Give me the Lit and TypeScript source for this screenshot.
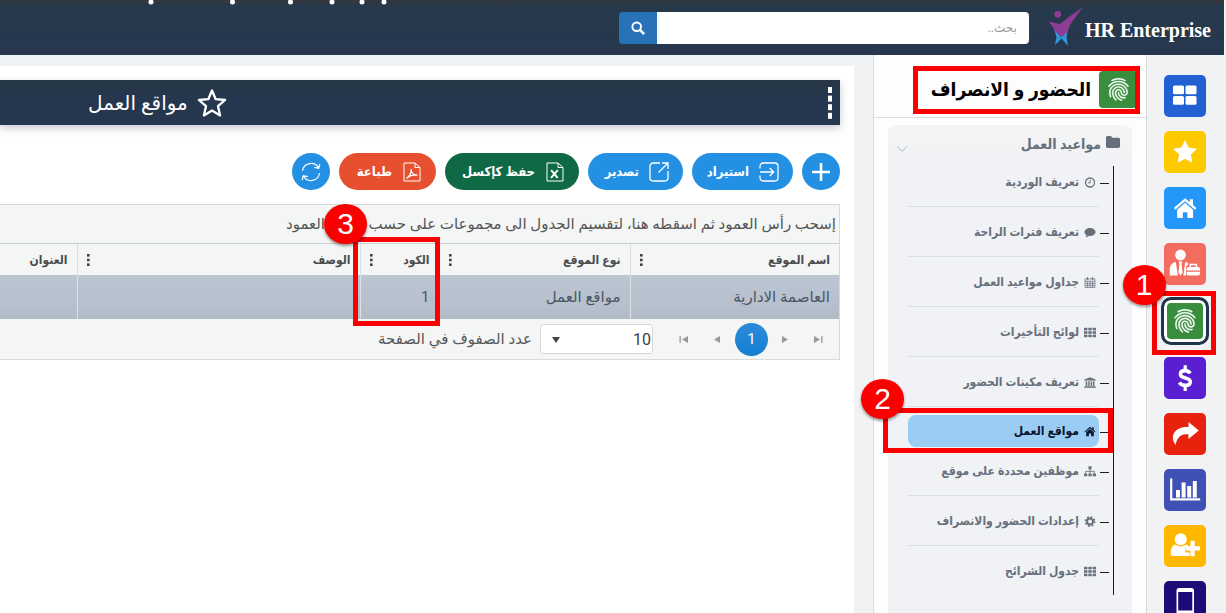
import { LitElement, html, css, svg, TemplateResult } from "lit";
import { customElement, property, state } from "lit/decorators.js";
import { classMap } from "lit/directives/class-map.js";

const icon = (box: string, body: TemplateResult, cls = "") =>
  html`<svg class=${"icon " + cls} viewBox=${box} aria-hidden="true">${body}</svg>`;

const fingerprint = svg`<path fill="currentColor" stroke="currentColor" stroke-width=".35" d="M17.81 4.47c-.08 0-.16-.02-.23-.06C15.66 3.42 14 3 12.01 3c-1.98 0-3.86.47-5.57 1.41-.24.13-.54.04-.68-.2-.13-.24-.04-.55.2-.68C7.82 2.52 9.86 2 12.01 2c2.13 0 3.99.47 6.03 1.52.25.13.34.43.21.67-.09.18-.26.28-.44.28zM3.5 9.72c-.1 0-.2-.03-.29-.09-.23-.16-.28-.47-.12-.7.99-1.4 2.25-2.5 3.75-3.27C9.98 4.04 14 4.03 17.15 5.65c1.5.77 2.76 1.86 3.75 3.25.16.22.11.54-.12.7-.23.16-.54.11-.7-.12-.9-1.26-2.04-2.25-3.39-2.94-2.87-1.47-6.54-1.47-9.4.01-1.36.7-2.5 1.7-3.4 2.96-.08.14-.23.21-.39.21zm6.25 12.07c-.13 0-.26-.05-.35-.15-.87-.87-1.34-1.43-2.01-2.64-.69-1.23-1.05-2.73-1.05-4.34 0-2.97 2.54-5.39 5.66-5.39s5.66 2.42 5.66 5.39c0 .28-.22.5-.5.5s-.5-.22-.5-.5c0-2.42-2.09-4.39-4.66-4.39-2.57 0-4.66 1.97-4.66 4.39 0 1.44.32 2.77.93 3.85.64 1.15 1.08 1.64 1.85 2.42.19.2.19.51 0 .71-.11.1-.24.15-.37.15zm7.17-1.85c-1.19 0-2.24-.3-3.1-.89-1.49-1.01-2.38-2.65-2.38-4.39 0-.28.22-.5.5-.5s.5.22.5.5c0 1.41.72 2.74 1.94 3.56.71.48 1.54.71 2.54.71.24 0 .64-.03 1.04-.1.27-.05.53.13.58.41.05.27-.13.53-.41.58-.57.11-1.07.12-1.21.12zM14.91 22c-.04 0-.09-.01-.13-.02-1.59-.44-2.63-1.03-3.72-2.1-1.4-1.39-2.17-3.24-2.17-5.22 0-1.62 1.38-2.94 3.08-2.94 1.7 0 3.08 1.32 3.08 2.94 0 1.07.93 1.94 2.08 1.94s2.08-.87 2.08-1.94c0-3.77-3.25-6.83-7.25-6.83-2.84 0-5.44 1.58-6.61 4.03-.39.81-.59 1.76-.59 2.8 0 .78.07 2.01.67 3.61.1.26-.03.55-.29.64-.26.1-.55-.04-.64-.29-.49-1.31-.73-2.61-.73-3.96 0-1.2.23-2.29.68-3.24 1.33-2.79 4.28-4.6 7.51-4.6 4.55 0 8.25 3.51 8.25 7.83 0 1.62-1.38 2.94-3.08 2.94s-3.08-1.32-3.08-2.94c0-1.07-.93-1.94-2.08-1.94s-2.08.87-2.08 1.94c0 1.71.66 3.31 1.87 4.51.95.94 1.86 1.46 3.27 1.85.27.07.42.35.35.61-.05.23-.26.38-.47.38z"/>`;

const houseShape = svg`<path fill="currentColor" d="M12 2.500 1.200 12l1.400 1.600L12 5.400l9.400 8.200 1.400-1.600-3.300-2.900V3.600h-3v2.900z"/><path fill="currentColor" d="M12 7 4.400 13.600V21.500h5.400v-5.600h4.400v5.600h5.400v-7.900z"/>`;

const gridShape = svg`<g fill="currentColor"><rect x="0" y="0" width="4" height="3"/><rect x="5" y="0" width="4" height="3"/><rect x="10" y="0" width="4" height="3"/><rect x="0" y="4" width="4" height="3"/><rect x="5" y="4" width="4" height="3"/><rect x="10" y="4" width="4" height="3"/><rect x="0" y="8" width="4" height="3"/><rect x="5" y="8" width="4" height="3"/><rect x="10" y="8" width="4" height="3"/></g>`;

interface Entry { label: string; box: string; shape: TemplateResult; }

const menu: Entry[] = [
  { label: "تعريف الوردية", box: "0 0 12 12", shape: svg`<circle cx="6" cy="6" r="4.900" fill="none" stroke="currentColor" stroke-width="1.400"/><path d="M6.200 3v3.400H3.800" fill="none" stroke="currentColor"/>` },
  { label: "تعريف فترات الراحة", box: "0 0 12 12", shape: svg`<path fill="currentColor" d="M6 1.200c3.400 0 6 1.900 6 4.300s-2.600 4.300-6 4.300c-.5 0-1-.1-1.400-.1C3.500 10.700 2.200 11.200 1 11.300c.7-.8 1.100-1.500 1.200-2.400C.8 8.100 0 6.900 0 5.500c0-2.400 2.600-4.300 6-4.300z"/>` },
  { label: "جداول مواعيد العمل", box: "0 0 12 12", shape: svg`<path d="M.6 2.100h10.800v9.300H.6zM.6 4.600h10.800M.6 6.900h10.800M.6 9.100h10.800M3.300 4.600v6.800M6 4.600v6.800M8.700 4.600v6.800" fill="none" stroke="currentColor" stroke-width=".8"/><path d="M3.300.3v2.700M8.700.3v2.700" stroke="currentColor" stroke-width="1.500"/>` },
  { label: "لوائح التأخيرات", box: "0 0 14 11", shape: gridShape },
  { label: "تعريف مكينات الحضور", box: "0 0 14 12", shape: svg`<path fill="currentColor" d="M7 0 0 2.800v.9h14v-.9zM2 4.500h1.800v5H2zm2.900 0h1.700v5H4.900zm2.900 0h1.700v5H7.800zm2.700 0h1.700v5h-1.700zM1 9.900h12v.9H1zM0 11.100h14v.9H0z"/>` },
  { label: "مواقع العمل", box: "0 1 24 22", shape: houseShape },
  { label: "موظفين محددة على موقع", box: "0 0 14 12", shape: svg`<path fill="currentColor" d="M5.200 0h3.600v3.400H5.200zM0 8.200h3.800v3.400H0zM5.100 8.200h3.800v3.400H5.100zM10.200 8.200H14v3.400h-3.800z"/><path d="M7 3v5.500M1.900 8.500V5.800h10.200v2.700" fill="none" stroke="currentColor"/>` },
  { label: "إعدادات الحضور والانصراف", box: "0 0 12 12", shape: svg`<circle cx="6" cy="6" r="3.200" fill="none" stroke="currentColor" stroke-width="2.200"/><circle cx="6" cy="6" r="4.900" fill="none" stroke="currentColor" stroke-width="2" stroke-dasharray="2 1.848"/>` },
  { label: "جدول الشرائح", box: "0 0 14 11", shape: gridShape },
];

const apps: { name: string; tone: string; shape: TemplateResult }[] = [
  { name: "الرئيسية", tone: "blue", shape: svg`<g fill="currentColor"><rect x="2" y="3.500" width="11" height="8.800" rx="1.500"/><rect x="14.500" y="3.500" width="11" height="8.800" rx="1.500"/><rect x="2" y="14" width="11" height="8.800" rx="1.500"/><rect x="14.500" y="14" width="11" height="8.800" rx="1.500"/></g>` },
  { name: "المفضلة", tone: "gold", shape: svg`<path fill="currentColor" d="m14 2 3.600 7.600 8.400 1.100-6.100 5.800 1.500 8.300-7.400-4-7.400 4 1.500-8.300L2 10.700l8.400-1.100z"/>` },
  { name: "المنزل", tone: "sky", shape: svg`<g transform="translate(1.500 1.500) scale(1.050)">${houseShape}</g>` },
  { name: "الموظفون", tone: "coral", shape: svg`<g fill="currentColor"><circle cx="9.500" cy="5" r="5.400"/><path d="M-1.200 25.500v-6.500c0-4 2.600-6.500 6-7l2 13.500zM7.600 11.600h3.800l-.9 3 1.200 8-2.200 2.900-2.200-2.900 1.200-8zM14.200 12c1.300.2 2.400.6 3.300 1.200-.5.400-.9 1-1 2.200-1.100.3-1.500 1-1.500 2v8.100h-2.600z"/><path d="M15.500 19c0-1.200.8-2 2-2h9.500c1.200 0 2 .8 2 2v1.600H15.500zM15.500 21.700H29v1.800c0 1.200-.8 2-2 2h-9.500c-1.200 0-2-.8-2-2z"/></g><path d="M19.200 17v-2.400h6.200V17" fill="none" stroke="currentColor" stroke-width="1.500"/>` },
  { name: "الحضور و الانصراف", tone: "green", shape: fingerprint },
  { name: "الرواتب", tone: "violet", shape: svg`<path fill="none" stroke="currentColor" stroke-width="3.600" d="M19.200 9.400C18 7.500 16.400 6.600 14.200 6.600c-3 0-4.800 1.400-4.800 3.600 0 5.200 9.900 2.200 9.900 7.500 0 2.300-2 3.700-5.100 3.700-2.600 0-4.500-1-5.800-3"/><path d="M14.200 1.200v5M14.200 21.500V27" stroke="currentColor" stroke-width="3.200"/>` },
  { name: "الطلبات", tone: "red", shape: svg`<path fill="currentColor" d="M17.500 2 27.800 10.600l-10.300 8.400v-4.600C10.500 14 6.500 16.200 4.600 25 1.500 20.700 1 16.500 3.200 12.800 5.800 8.500 10.800 6.700 17.500 6.900z"/>` },
  { name: "التقارير", tone: "indigo", shape: svg`<path d="M.2 2.500v20.800h29" fill="none" stroke="currentColor" stroke-width="2.200"/><path fill="currentColor" d="M5 14h4v7.500H5zM10.600 6.500h4v15h-4zM16.200 10h4v11.500h-4zM21.800 5h4v16.500h-4z"/>` },
  { name: "إضافة موظف", tone: "amber", shape: svg`<g fill="currentColor"><circle cx="9.700" cy="7.300" r="6"/><path d="M4.500 12.500c3.300 2.500 7.200 2.500 10.500 0 1.600.4 2.800 1.300 3.500 2.500h-4.300v5.500h4.500v3.500H2.500C.2 24-.7 22.500-.3 20c.5-4 2-7 4.800-7.500z"/><path d="M19.500 8.700h4.200v5.600H29v4.200h-5.300v5.800h-4.200v-5.800h-5v-4.200h5z"/></g>` },
  { name: "الجوال", tone: "navy", shape: svg`<path fill="currentColor" fill-rule="evenodd" d="M8 0h12.500C21.900 0 23 1 23 2.400v24.200c0 1.400-1.100 2.400-2.500 2.400H8c-1.400 0-2.500-1-2.500-2.400V2.400C5.500 1 6.600 0 8 0zm-.8 4v18.500h14.100V4z"/>` },
];

@customElement("hr-callout")
class HrCallout extends LitElement {
  @property() number = "";
  static styles = css`
    :host { position: absolute; inset: 0; box-sizing: border-box; border: 5px solid #fb0000; pointer-events: none; z-index: 4; }
    .ball { position: absolute; width: 43px; height: 40px; border-radius: 50%; background: #fb0000; color: #fff; top: -38px; left: -34px;
      display: flex; align-items: center; justify-content: center; font: 30px/40px "Liberation Sans", sans-serif; box-shadow: 0 2px 3px #0006; }
    :host([low]) .ball { left: -27px; top: -34px; }
    :host([rail]) .ball { top: -31px; }
  `;
  render() { return this.number ? html`<span class="ball">${this.number}</span>` : null; }
}

@customElement("app-root")
export class AppRoot extends LitElement {
  @state() private current = 5;

  static styles = css`
    :host { display: block; direction: rtl; height: 100vh; overflow: hidden; font-family: Roboto, "DejaVu Sans", sans-serif; color: #555; }
    * { box-sizing: border-box; }
    button, input, select { font: inherit; color: inherit; margin: 0; }
    button { border: 0; padding: 0; cursor: pointer; }
    .icon { display: block; flex: none; overflow: visible; }
    .page { height: 100%; display: flex; flex-direction: column; border-right: 2px solid #f0f1f2; background: #f2f2f3; }

    .top { flex: none; height: 55px; background: linear-gradient(#333840 0 3px, #27394b 3px, #26374f); display: flex; align-items: center; padding-right: 13px; position: relative; }
    .loader { position: absolute; top: 0; left: 148px; width: 240px; height: 5px; }
    .brand { direction: ltr; display: flex; align-items: center; gap: 2px; color: #fff; text-decoration: none; font: bold 20px/24px "Liberation Serif", serif; padding-top: 4px; }
    .brand .icon { width: 35px; height: 40px; margin-top: -6px; }
    .search { display: flex; flex: 0 1 410px; margin-right: 19px; height: 32px; }
    .search input { flex: 1; min-width: 0; border: 0; background: #fff; border-radius: 0 4px 4px 0; padding: 0 12px; font-size: 12px; outline: 0; }
    .search input::placeholder { color: #999; opacity: 1; }
    .search button { width: 38px; background: #2872b8; color: #fff; border-radius: 4px 0 0 4px; display: grid; place-items: center; }
    .search .icon { width: 14px; height: 14px; }

    .body { flex: 1; min-height: 0; display: flex; }
    .rail { flex: none; width: 78px; border-left: 1px solid #d6d8da; background: #f1f2f4; display: flex; flex-direction: column; align-items: center; gap: 14px; padding: 20px 2px 0 0; }
    .spot { position: relative; flex: none; }
    .tile { width: 42px; height: 42px; border-radius: 5px; color: #fff; display: grid; place-items: center; }
    .tile .icon { width: 28px; height: 28px; }
    .blue { background: #2161d4; } .gold { background: #ffc900; } .sky { background: #2497fb; } .coral { background: #f36c60; }
    .green { background: #388e3c; } .violet { background: #5a1fd0; } .red { background: #e7230e; } .indigo { background: #3f51b5; }
    .amber { background: #ffb700; } .navy { background: #1f0b78; }
    .spot.on { margin: -2px 0; }
    .spot.on .tile { width: 48px; height: 48px; border: 3px solid #22344a; border-radius: 10px; background: #388e3c; box-shadow: inset 0 0 0 3px #fff; }
    .rail hr-callout { inset: -6px -7px -10px -9px; }

    .side { flex: none; width: 273px; background: #fdfdfd; border-left: 1px solid #d9dcdf; display: flex; flex-direction: column; font-family: Roboto, "DejaVu Sans Condensed", sans-serif; }
    .side-head { flex: none; height: 63px; border-bottom: 1px solid #d9dee0; padding: 11px 6px 0 0; display: flex; }
    .module { position: relative; height: 48px; width: 227px; padding: 0 3px 1px 0; display: flex; align-items: center; gap: 8px; margin: 0; color: #000; font-size: 19px; line-height: 30px; font-weight: bold; white-space: nowrap; }
    .badge { flex: none; width: 38px; height: 37px; background: #388e3c; border-radius: 4px; display: grid; place-items: center; color: #fff; }
    .badge .icon { width: 27px; height: 27px; }
    .panel { flex: 1; margin: 7px 14px 0; background: linear-gradient(#f4f4f4, #f0f2f5 40px); border-radius: 8px 8px 0 0; padding: 8px 18px 0 20px; }
    .group { width: 100%; display: flex; align-items: center; background: none; height: 22px; gap: 5px; margin-bottom: 11px; color: #656f7b; font-size: 14px; font-weight: bold; }
    .group .icon { width: 14px; height: 12px; margin-right: -6px; margin-bottom: 4px; }
    .group .chev { width: 10px; height: 6px; margin: 9px auto 0 -11px; }
    .list { list-style: none; margin: 0; padding: 0 14px 0 0; border-right: 1px solid #1c1c1c; }
    .list li { position: relative; padding: 15px 0 14px; border-bottom: 1px solid #dcdfe2; }
    .list li:first-child { padding-top: 6px; }
    .list li:last-child { border-bottom: 0; }
    .list li::before { content: ""; position: absolute; right: -10px; width: 9px; height: 1px; margin-top: 11px; background: #1c1c1c; }
    .list a { display: flex; align-items: center; gap: 5px; padding-right: 3px; line-height: 20px; font-size: 12px; font-weight: bold; color: #68707b; text-decoration: none; white-space: nowrap; }
    .list .icon { height: 11px; width: 12px; }
    .list li.on { margin-top: 8px; padding: 0; border: 0; }
    .list li.on::before { margin-top: 17px; }
    .list .on a { background: #9bcdf4; border-radius: 8px; color: #0b1530; line-height: 32px; }
    .list .on + li { padding-top: 14px; }
    .list hr-callout { inset: -7px -14px -6px -25px; }

    .main { flex: 1; min-width: 0; padding: 11px 0 0 0; background: linear-gradient(#eaf3f8, #f2f2f3 10px); }
    .card { height: 100%; margin-right: 19px; background: #fff; padding: 14px 14px 0 0; }
    .title { height: 45px; background: linear-gradient(#263646, #25374f 40%, #25364d); box-shadow: 0 3px 8px #25364d44; color: #fff; display: flex; align-items: center; justify-content: space-between; padding: 0 5px 0 88px; }
    .title h1 { margin: 0; font-size: 20px; line-height: 30px; font-weight: normal; display: flex; align-items: center; gap: 9px; white-space: nowrap; }
    .title button { background: none; color: #fff; }
    .title h1 .icon { width: 30px; height: 30px; }
    .title .dots { width: 9px; height: 32px; }
    .tools { display: flex; gap: 9px; padding: 28px 0 14px; }
    .tools button { height: 37px; min-width: 38px; border-radius: 19px; color: #fff; font-family: Roboto, "DejaVu Sans Condensed", sans-serif; font-size: 13px; font-weight: bold; display: flex; align-items: center; justify-content: flex-start; gap: 10px; background: #2490e4; white-space: nowrap; padding: 0 9px; }
    .tools .icon { width: 20px; height: 20px; fill: none; stroke: currentColor; stroke-width: 1; }
    .tools .wide { padding: 0 14px; }
    .tools .excel { background: #106945; width: 134px; }
    .tools .print { background: #e6502f; width: 97px; }
    .tools .imp { width: 101px; } .tools .exp { width: 95px; }

    .grid { border: 1px solid #d8dada; border-left: 0; background: #f4f5f5; }
    .drop { padding: 0 3px; height: 39px; line-height: 39px; font-size: 15px; white-space: nowrap; overflow: hidden; border-bottom: 1px solid #ccd0d0; }
    table { width: 100%; border-collapse: collapse; table-layout: fixed; font-size: 15px; }
    .c-name { width: 209px; } .c-type { width: 191px; } .c-code { width: 79px; } .c-desc { width: 283px; }
    th, td { text-align: right; padding: 0 9px; border-left: 1px solid #dcdede; white-space: nowrap; position: relative; }
    th:last-child, td:last-child { border-left: 0; }
    th { height: 31px; font-family: Roboto, "DejaVu Sans Condensed", sans-serif; font-size: 12px; font-weight: bold; color: #4a4c50; }
    .head { display: flex; align-items: center; justify-content: space-between; }
    .head button { background: none; display: grid; }
    .head .icon { width: 3px; height: 12px; }
    td { height: 44px; background: linear-gradient(#bcc5d2, #b6c0cc 70%, #b0bbc5); color: #4c5564; border-color: #dde1e6; }
    .table-wrap { position: relative; }
    .code-mark { position: absolute; top: -7px; bottom: -7px; right: 399px; width: 87px; }
    .pager { height: 40px; display: flex; align-items: center; padding-right: 14px; }
    .pager button { width: 14px; height: 20px; display: grid; place-items: center; background: none; color: #999; margin-left: 20px; }
    .pager button .icon { width: 9px; height: 7px; }
    .pager .num { width: 33px; height: 33px; border-radius: 50%; background: linear-gradient(#2d8bd8, #127fd3); color: #fff; font-size: 15px; margin: 0 -11px 0 11px; }
    .size { position: relative; margin-right: 3px; }
    .size select { display: block; appearance: none; width: 113px; height: 30px; border: 1px solid #d5d7d8; border-radius: 3px; background: #fff; padding: 0 1px; font-size: 16px; color: #3e4146; }
    .size .icon { position: absolute; left: 12px; top: 13px; width: 8px; height: 6px; }
    .pager label { font-size: 15px; margin-right: 8px; white-space: nowrap; }
  `;

  private pick(e: Event, i: number) { e.preventDefault(); this.current = i; }

  private heading(text: string, last = false) {
    return html`<th scope="col"><div class="head"><span>${text}</span>${last ? null : html`<button aria-label=${"خيارات " + text}>${icon("0 0 3 12", svg`<g fill="#3f4247"><rect width="2.600" height="2.600"/><rect y="4.700" width="2.600" height="2.600"/><rect y="9.400" width="2.600" height="2.600"/></g>`)}</button>`}</div></th>`;
  }

  render() {
    return html`
    <div class="page">
      <header class="top">
        <svg class="loader" viewBox="0 0 240 5" aria-hidden="true"><g fill="#fff"><circle cx="3" cy="2" r="2.500"/><circle cx="84.500" cy="2" r="2.500"/><circle cx="142.500" cy="2" r="2.500"/><circle cx="184" cy="2" r="2.500"/><circle cx="214" cy="2" r="2.500"/><circle cx="236" cy="2" r="2.500"/></g></svg>
        <a class="brand" href="#">
          ${icon("0 0 35 40", svg`<path fill="#2f9ad6" d="M6 22 13 27l7-5-1.500 8L20 39l-6.500-7.500L7 38l1.500-8z"/><path fill="#8d3d94" d="M35 0 22.500 17l-3.200 8.500-6.300 5-5.500-6L1 14.500l11 2.500 9.500-7.500z"/><circle cx="9.800" cy="7.300" r="3.400" fill="#8d3d94"/>`)}
          <span>HR Enterprise</span>
        </a>
        <form class="search" role="search" @submit=${(e: Event) => e.preventDefault()}>
          <input type="text" placeholder="بحث.." aria-label="بحث" />
          <button aria-label="بحث">${icon("0 0 14 14", svg`<circle cx="5.700" cy="5.700" r="4.300" fill="none" stroke="currentColor" stroke-width="2"/><path d="m8.900 8.900 4.200 4.200" stroke="currentColor" stroke-width="2.500"/>`)}</button>
        </form>
      </header>
      <div class="body">
        <nav class="rail" aria-label="التطبيقات">
          ${apps.map(a => {
            const on = a.tone === "green";
            return html`<div class=${classMap({ spot: true, on })}>
              <button class=${"tile " + a.tone} aria-label=${a.name}>${icon(on ? "0 0 24 24" : "0 0 28 28", a.shape)}</button>
              ${on ? html`<hr-callout rail number="1"></hr-callout>` : null}
            </div>`;
          })}
        </nav>
        <aside class="side">
          <div class="side-head">
            <h2 class="module"><span class="badge">${icon("0 0 24 24", fingerprint)}</span><span>الحضور و الانصراف</span><hr-callout></hr-callout></h2>
          </div>
          <nav class="panel" aria-label="الحضور و الانصراف">
            <button class="group">
              ${icon("0 0 14 12", svg`<path fill="currentColor" d="M0 1.800C0 .8.700 0 1.700 0h2.700c1 0 1.500.8 1.500 1.800h6.500c1 0 1.600.7 1.600 1.600v6.900c0 1-.7 1.700-1.600 1.700H1.700C.7 12 0 11.300 0 10.300z"/>`)}
              <span>مواعيد العمل</span>
              ${icon("0 0 10 6", svg`<path d="m0 .5 5 4.800 5-4.800" fill="none" stroke="#b4b9be"/>`, "chev")}
            </button>
            <ul class="list">
              ${menu.map((m, i) => html`<li class=${classMap({ on: i === this.current })}>
                <a href="#" @click=${(e: Event) => this.pick(e, i)}>${icon(m.box, m.shape)}<span>${m.label}</span></a>
                ${i === this.current ? html`<hr-callout low number="2"></hr-callout>` : null}
              </li>`)}
            </ul>
          </nav>
        </aside>
        <main class="main">
          <div class="card">
            <div class="title">
              <button aria-label="القائمة">${icon("0 0 9 32", svg`<g fill="#fff"><rect x="2" width="4" height="6"/><rect x="2" y="8.600" width="4" height="6"/><rect x="2" y="17.200" width="4" height="6"/><rect x="2" y="25.800" width="4" height="6"/></g>`, "dots")}</button>
              <h1>${icon("0 0 30 30", svg`<path d="m15 2.500 3.700 8.700 9.400.8-7.100 6.200 2.100 9.200-8.100-4.900-8.100 4.900L9 18.200 1.900 12l9.400-.8z" fill="none" stroke="#fff" stroke-width="2.300" stroke-linejoin="round"/>`)}<span>مواقع العمل</span></h1>
            </div>
            <div class="tools">
              <button aria-label="إضافة">${icon("0 0 20 20", svg`<path d="M10 1v18M1 10h18" stroke-width="2.600"/>`)}</button>
              <button class="wide imp">${icon("0 0 20 20", svg`<path d="M1 6.500V4.200C1 2.400 2.400 1 4.200 1h11.600C17.600 1 19 2.400 19 4.200v11.600c0 1.800-1.400 3.200-3.200 3.200H4.200C2.400 19 1 17.600 1 15.800v-2.300M1 10h13.500M10.700 6l4 4-4 4" stroke-width="1.300"/>`)}<span>استيراد</span></button>
              <button class="wide exp">${icon("0 0 20 20", svg`<path d="M11 1H4.200C2.400 1 1 2.400 1 4.200v11.600C1 17.600 2.400 19 4.200 19h11.600c1.800 0 3.200-1.400 3.200-3.200V9M9.500 10.500 19 1M13 1h6v6" stroke-width="1.300"/>`)}<span>تصدير</span></button>
              <button class="wide excel">${icon("0 0 20 20", svg`<path d="M2 1h11l5 4.500V19H2zM13 1v4.500h5"/><path d="m6.200 8.200 6.400 7.600M12.800 8.200l-6.800 7.600" stroke-width="2"/>`)}<span>حفظ كإكسل</span></button>
              <button class="wide print">${icon("0 0 20 20", svg`<path d="M2 1h11l5 4.500V19H2zM13 1v4.500h5"/><path d="M4.500 16.500c3-2 5.500-6.500 4.500-9.500 0 3 2 6.500 6.500 6-4-.5-8 .8-11 3.500z" stroke-width="1.200"/>`)}<span>طباعة</span></button>
              <button aria-label="تحديث">${icon("0 0 20 20", svg`<path d="M1.500 9A8.600 8.600 0 0 1 17.600 6M18.500 11A8.600 8.600 0 0 1 2.400 14M18.800 1.800 17.800 6.300l-4.600-.9M1.200 18.200l1-4.500 4.600.9" stroke-width="1.200"/>`)}</button>
            </div>
            <section class="grid">
              <div class="drop">إسحب رأس العمود ثم اسقطه هنا، لتقسيم الجدول الى مجموعات على حسب بيانات العمود</div>
              <div class="table-wrap">
                <table>
                  <colgroup><col class="c-name" /><col class="c-type" /><col class="c-code" /><col class="c-desc" /><col /></colgroup>
                  <thead><tr>${this.heading("اسم الموقع")}${this.heading("نوع الموقع")}${this.heading("الكود")}${this.heading("الوصف")}${this.heading("العنوان", true)}</tr></thead>
                  <tbody><tr><td>العاصمة الادارية</td><td>مواقع العمل</td><td>1</td><td></td><td></td></tr></tbody>
                </table>
                <div class="code-mark"><hr-callout number="3"></hr-callout></div>
              </div>
              <div class="pager">
                <button aria-label="الأخيرة">${icon("0 0 9 7", svg`<path fill="currentColor" d="M0 0l6 3.500L0 7zM7.200 0h1.300v7H7.200z"/>`)}</button>
                <button aria-label="التالية">${icon("0 0 9 7", svg`<path fill="currentColor" d="M2 0l6 3.500L2 7z"/>`)}</button>
                <button class="num">1</button>
                <button aria-label="السابقة">${icon("0 0 9 7", svg`<path fill="currentColor" d="M7 0 1 3.500 7 7z"/>`)}</button>
                <button aria-label="الأولى">${icon("0 0 9 7", svg`<path fill="currentColor" d="M9 0 3 3.500 9 7zM.5 0h1.300v7H.5z"/>`)}</button>
                <span class="size"><select id="rows"><option>10</option><option>20</option><option>50</option></select>${icon("0 0 8 6", svg`<path fill="#444" d="M0 0h8L4 6z"/>`)}</span>
                <label for="rows">عدد الصفوف في الصفحة</label>
              </div>
            </section>
          </div>
        </main>
      </div>
    </div>`;
  }
}
